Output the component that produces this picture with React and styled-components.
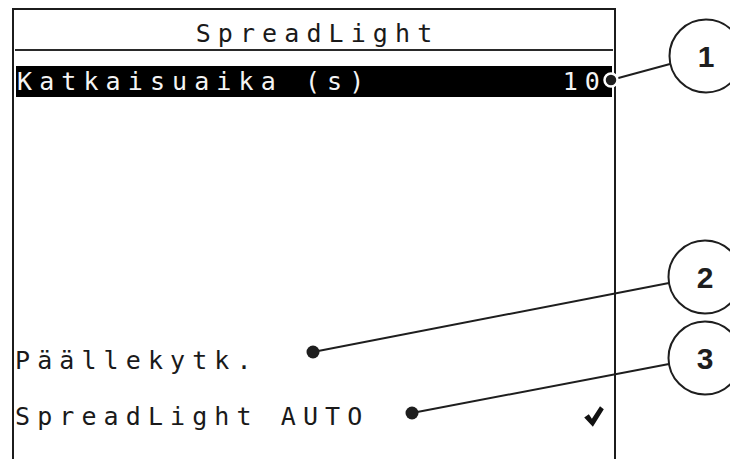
import React from 'react';
import styled, { createGlobalStyle } from 'styled-components';

const GlobalStyle = createGlobalStyle`
  html, body {
    margin: 0;
    padding: 0;
    background: #ffffff;
    overflow: hidden;
  }
`;

const rows = [
	{ label: 'Katkaisuaika (s)', value: '10', selected: true },
	{ label: '' },
	{ label: '' },
	{ label: '' },
	{ label: '' },
	{ label: 'Päällekytk.' },
	{ label: 'SpreadLight AUTO', checked: true },
];

const callouts = [
	{ n: '1', cx: 706, cy: 56, from: [611, 80], to: [670, 64], ring: true },
	{ n: '2', cx: 705, cy: 277, from: [313, 352], to: [669, 283] },
	{ n: '3', cx: 705, cy: 358, from: [412, 413], to: [669, 364] },
];

export default function App() {
	return (
		<Page>
			<GlobalStyle />
			<Screen>
				<Title>SpreadLight</Title>
				<Separator />
				<List>
					{rows.map((row, i) => (
						<Row key={i} selected={row.selected}>
							<Label>{row.label}</Label>
							{row.value && <Value>{row.value}</Value>}
							{row.checked && (
								<Check viewBox="0 0 14 15">
									<path d="M0 8.3 L3.3 5.9 L5.5 9.1 L11.3 0.2 L14 2.4 L6.2 14.8 Z" fill="#111" />
								</Check>
							)}
						</Row>
					))}
				</List>
			</Screen>
			<Overlay viewBox="0 0 730 459">
				{callouts.map((c) => (
					<g key={c.n}>
						<line x1={c.from[0]} y1={c.from[1]} x2={c.to[0]} y2={c.to[1]} stroke="#1e1e1e" strokeWidth="2" />
						<circle
							cx={c.from[0]}
							cy={c.from[1]}
							r="6.5"
							fill="#1e1e1e"
							stroke={c.ring ? '#ffffff' : 'none'}
							strokeWidth="2.5"
						/>
						<circle cx={c.cx} cy={c.cy} r="36.5" fill="#ffffff" stroke="#1e1e1e" strokeWidth="2" />
						<CalloutNumber x={c.cx} y={c.cy + 11} textAnchor="middle">{c.n}</CalloutNumber>
					</g>
				))}
			</Overlay>
		</Page>
	);
}

const Page = styled.div`
  position: relative;
  width: 730px;
  height: 459px;
  overflow: hidden;
  background: #ffffff;
  padding: 8px 0 0 12px;
  box-sizing: border-box;
`;

const Screen = styled.div`
  width: 604px;
  height: 470px;
  box-sizing: border-box;
  border: 2px solid #1c1c1c;
  border-bottom: none;
  font-family: "DejaVu Sans Mono", "Liberation Mono", monospace;
  font-size: 25px;
  letter-spacing: 7.1px;
  color: #1a1a1a;
`;

const Title = styled.div`
  padding-top: 9px;
  height: 30px;
  line-height: 29px;
  text-align: center;
  padding-left: 7px;
`;

const Separator = styled.div`
  height: 2px;
  margin: 0 1px;
  background: #2a2a2a;
`;

const List = styled.div`
  display: flex;
  flex-direction: column;
  gap: 24.75px;
  padding-top: 15px;
`;

const Row = styled.div`
  display: flex;
  align-items: center;
  justify-content: space-between;
  height: 31px;
  line-height: 31px;
  margin: 0 ${(p) => (p.selected ? '2px' : '0')};
  padding: 0 2px 0 1px;
  background: ${(p) => (p.selected ? '#000000' : 'transparent')};
  color: ${(p) => (p.selected ? '#f4f4f4' : '#1a1a1a')};
  white-space: pre;
`;

const Label = styled.span``;

const Value = styled.span`
  margin-right: 3px;
`;

const Check = styled.svg`
  width: 20px;
  height: 21px;
  margin-right: 8px;
`;

const Overlay = styled.svg`
  position: absolute;
  left: 0;
  top: 0;
  width: 730px;
  height: 459px;
  pointer-events: none;
`;

const CalloutNumber = styled.text`
  font-family: "Liberation Sans", Arial, sans-serif;
  font-weight: bold;
  font-size: 30px;
  fill: #1e1e1e;
`;
